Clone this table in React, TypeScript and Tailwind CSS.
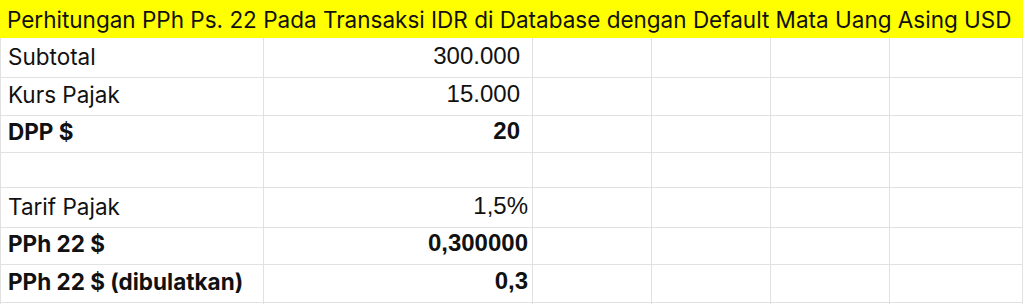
const rows = [
  { label: 'Subtotal', value: '300.000', bold: false, pad: 'pr-[12px]', h: 'h-[38px]' },
  { label: 'Kurs Pajak', value: '15.000', bold: false, pad: 'pr-[12px]', h: 'h-[37px]' },
  { label: 'DPP $', value: '20', bold: true, pad: 'pr-[12px]', h: 'h-[38px]' },
  { label: '', value: '', bold: false, pad: 'pr-[12px]', h: 'h-[37px]' },
  { label: 'Tarif Pajak', value: '1,5%', bold: false, pad: 'pr-[4px]', h: 'h-[37px]' },
  { label: 'PPh 22 $', value: '0,300000', bold: true, pad: 'pr-[4px]', h: 'h-[38px]' },
  { label: 'PPh 22 $ (dibulatkan)', value: '0,3', bold: true, pad: 'pr-[4px]', h: 'h-[37px]' },
  { label: '', value: '', bold: false, pad: 'pr-[4px]', h: 'h-[37px]' },
];

const labelFont = "font-['Inter','Open_Sans',sans-serif]";
const numFont = "font-['Liberation_Sans',Arial,sans-serif]";

export default function App() {
  return (
    <div className="w-[1024px] h-[304px] overflow-hidden bg-white text-[#111]">
      <div className={`h-[38px] w-[1023px] bg-[#ffff00] flex items-center pl-[7px] pt-[1px] text-[22.5px] ${labelFont}`}>
        Perhitungan PPh Ps. 22 Pada Transaksi IDR di Database dengan Default Mata Uang Asing USD
      </div>
      {rows.map((r, i) => (
        <div key={i} className={`grid grid-cols-[264px_269px_119px_119px_119px_133px] ${r.h}`}>
          <div
            className={`border-l border-r border-b border-[#e1e1e1] flex items-end pb-[3px] pl-[7px] text-[22.5px] ${labelFont} ${
              r.bold ? 'font-bold' : ''
            }`}
          >
            {r.label}
          </div>
          <div
            className={`border-r border-b border-[#e1e1e1] flex items-end justify-end pb-[3px] ${r.pad} text-[24px] ${numFont} ${
              r.bold ? 'font-bold' : ''
            }`}
          >
            {r.value}
          </div>
          <div className="border-r border-b border-[#e1e1e1]" />
          <div className="border-r border-b border-[#e1e1e1]" />
          <div className="border-r border-b border-[#e1e1e1]" />
          <div className="border-r border-b border-[#e1e1e1]" />
        </div>
      ))}
    </div>
  );
}
